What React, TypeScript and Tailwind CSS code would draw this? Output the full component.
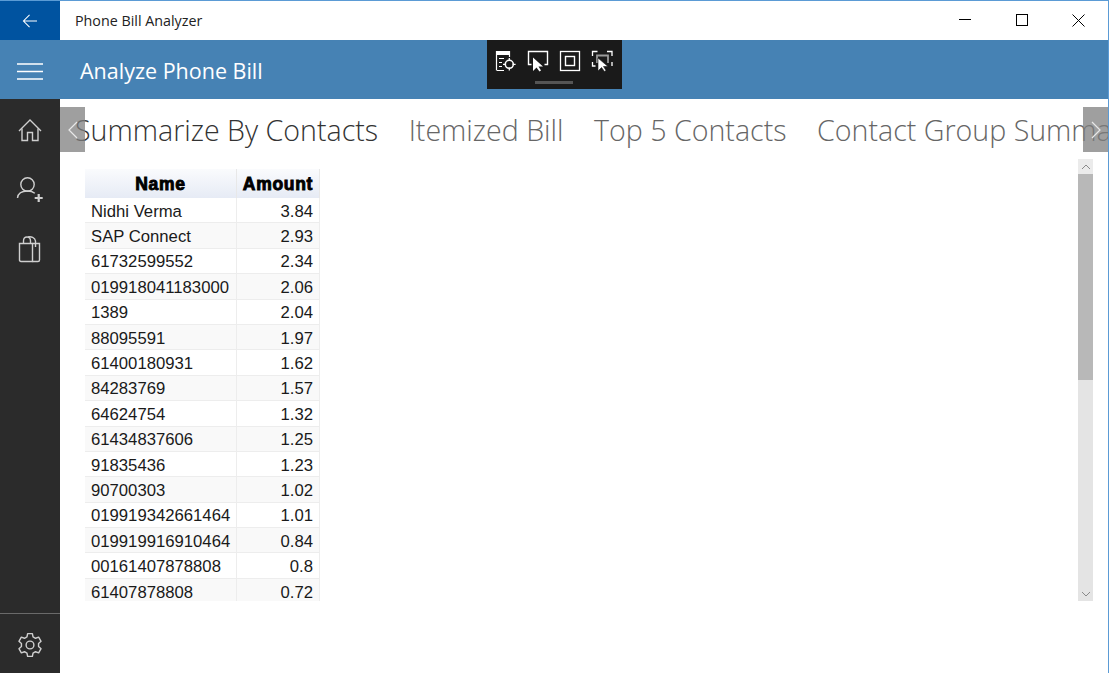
import React from "react";

const rows: [string, string][] = [
  ["Nidhi Verma", "3.84"],
  ["SAP Connect", "2.93"],
  ["61732599552", "2.34"],
  ["019918041183000", "2.06"],
  ["1389", "2.04"],
  ["88095591", "1.97"],
  ["61400180931", "1.62"],
  ["84283769", "1.57"],
  ["64624754", "1.32"],
  ["61434837606", "1.25"],
  ["91835436", "1.23"],
  ["90700303", "1.02"],
  ["019919342661464", "1.01"],
  ["019919916910464", "0.84"],
  ["00161407878808", "0.8"],
  ["61407878808", "0.72"],
];

function Toolbar() {
  return (
    <div className="absolute left-[487px] top-[39px] w-[135px] h-[49px] bg-[#1a1a1a]">
      <svg width="135" height="49" viewBox="0 1 135 49" fill="none" stroke="white">
        <path d="M9.5 31.5V12.5H22.5V18" strokeWidth="1.2" />
        <path d="M9 12H23V16H9Z" fill="white" stroke="none" />
        <path d="M12 19.5h5M12 23.5h3M12 27.5h3M10 31.5h7" strokeWidth="1.2" />
        <circle cx="22.3" cy="25.3" r="4" strokeWidth="1.6" />
        <path d="M22.3 19v3M22.3 28.6v3M16 25.3h3M25.6 25.3h3" strokeWidth="1.3" />
        <path d="M44.5 25.5H41.5V12.5H60.5V25.5H57.5" strokeWidth="1.4" />
        <path d="M46 18.5V32L49.5 28.5L52.5 32.5L54 31.5L51.5 27.5H56Z" fill="white" stroke="none" />
        <rect x="73.5" y="12.5" width="19" height="19" strokeWidth="1.3" />
        <rect x="78.5" y="17.5" width="9" height="9" strokeWidth="1.4" />
        <path d="M105.5 17v-4.5h5M120 12.5h5V17M105.5 23v4h3M125 23v4" strokeWidth="1.3" />
        <path d="M110 24v-7.5H121V24" stroke="#9a9a9a" strokeWidth="1.8" />
        <path d="M111 19V32L114.5 28.5L117.5 32.5L119 31.5L116.5 27.5H121Z" fill="white" stroke="#1a1a1a" strokeWidth="0.6" />
        <path d="M48 43.5H86" stroke="#555" strokeWidth="3" />
      </svg>
    </div>
  );
}

function Sidebar() {
  return (
    <aside className="w-[60px] shrink-0 bg-[#2b2b2b] flex flex-col justify-between text-[#cfcfcf]">
      <div className="flex flex-col">
        <div className="h-[60px] pt-[2px] flex items-center justify-center">
          <svg width="24" height="24" viewBox="0 0 24 24" fill="none" stroke="currentColor" strokeWidth="1.4">
            <path d="M1 13L12 2L23 13" />
            <path d="M4 10.5V22.5H9.5V14.5H14.5V22.5H20V10.5" />
          </svg>
        </div>
        <div className="h-[60px] flex items-center justify-center">
          <svg width="28" height="28" viewBox="0 0 28 28" fill="none" stroke="currentColor" strokeWidth="1.4">
            <circle cx="11.5" cy="9.5" r="6.7" />
            <path d="M1.5 23C2 18.5 6 16 11.5 16C14.5 16 17 16.8 18.8 18.2" />
            <path d="M22.7 19V27M18.7 23H26.7" strokeWidth="2.2" />
          </svg>
        </div>
        <div className="h-[60px] flex items-center justify-center">
          <svg width="24" height="28" viewBox="0 0 24 28" fill="none" stroke="currentColor" strokeWidth="1.4">
            <path d="M1.5 8.5H14.5V26.5H3C2 26.5 1.5 26 1.5 25Z" />
            <path d="M14.5 8.5H21.5V25C21.5 26 21 26.5 20 26.5H14.5" />
            <path d="M5.5 8.5V6C5.5 3.5 7 2 9 2C11 2 12.5 3.5 12.5 6V8.5" />
            <path d="M10 2C13 1.2 17 2.5 17.5 6V12" />
          </svg>
        </div>
      </div>
      <div className="h-[60px] pt-[3px] border-t border-[#6a6a6a] flex items-center justify-center">
        <svg width="26" height="26" viewBox="0 0 24 24" fill="none" stroke="currentColor" strokeWidth="1.3" strokeLinejoin="round">
          <path d="M9.8 1.5h4.4l.6 3 2.3 1.3 2.9-1 2.2 3.8-2.3 2v2.8l2.3 2-2.2 3.8-2.9-1-2.3 1.3-.6 3H9.8l-.6-3-2.3-1.3-2.9 1-2.2-3.8 2.3-2v-2.8l-2.3-2 2.2-3.8 2.9 1 2.3-1.3z" />
          <circle cx="12" cy="12" r="3.6" />
        </svg>
      </div>
    </aside>
  );
}

function BillTable() {
  return (
    <div className="w-[235px] h-[432px] overflow-hidden font-['Liberation_Sans',sans-serif] text-[16.7px] text-[#1a1a1a]">
      <div className="flex h-[29px] bg-gradient-to-b from-[#fafbfd] to-[#e6ebf5] text-black text-[17.5px] tracking-[0.7px] font-bold [-webkit-text-stroke:0.9px_black]">
        <div className="w-[152px] pt-[2px] flex items-center justify-center border-r border-[#e8e8e8]">Name</div>
        <div className="flex-1 pt-[2px] flex items-center justify-center border-r border-[#e8e8e8]">Amount</div>
      </div>
      {rows.map(([name, amount], i) => (
        <div
          key={name}
          className={`flex h-[25.4px] items-center border-b border-[#ededed] ${i % 2 === 1 ? "bg-[#f9f9f9]" : "bg-white"}`}
        >
          <div className="w-[152px] h-full pt-[2px] flex items-center pl-[6px] border-r border-[#ededed]">{name}</div>
          <div className="flex-1 h-full pt-[2px] flex items-center justify-end pr-[6px] border-r border-[#ededed]">{amount}</div>
        </div>
      ))}
    </div>
  );
}

function Scrollbar() {
  return (
    <div className="w-[15px] h-[442px] bg-[#e4e4e4] flex flex-col">
      <div className="h-[15px] bg-[#ebebeb] flex items-center justify-center">
        <svg width="10" height="6" viewBox="0 0 10 6" fill="none" stroke="#8a8a8a"><path d="M1 5L5 1L9 5" /></svg>
      </div>
      <div className="h-[206px] bg-[#b8b8b8]" />
      <div className="flex-1" />
      <div className="h-[15px] flex items-center justify-center">
        <svg width="10" height="6" viewBox="0 0 10 6" fill="none" stroke="#8a8a8a"><path d="M1 1L5 5L9 1" /></svg>
      </div>
    </div>
  );
}

export default function App() {
  return (
    <div className="relative w-[1109px] h-[673px] overflow-hidden bg-white border-t border-r border-[#5b9bd5] flex flex-col font-['Open_Sans',sans-serif]">
      <div className="h-[39px] shrink-0 flex items-center">
        <div className="w-[60px] h-full bg-[#0053a0] flex items-center justify-center">
          <svg width="16" height="14" viewBox="0 0 18 16" fill="none" stroke="white" strokeWidth="1.2">
            <path d="M17 8H1.5M8.5 1L1.5 8L8.5 15" />
          </svg>
        </div>
        <span className="ml-[15px] text-[14.3px] text-[#222]">Phone Bill Analyzer</span>
        <div className="ml-auto mr-[1px] flex items-center text-black">
          <div className="w-[57px] flex justify-center">
            <svg width="13" height="13" viewBox="0 0 13 13" stroke="black"><path d="M1 5.5H13" /></svg>
          </div>
          <div className="w-[57px] flex justify-center">
            <svg width="13" height="13" viewBox="0 0 13 13" fill="none" stroke="black"><rect x="1.5" y="0.5" width="11" height="11" /></svg>
          </div>
          <div className="w-[57px] flex justify-center">
            <svg width="13" height="13" viewBox="0 0 13 13" stroke="black"><path d="M0.5 0.5L12.5 12.5M12.5 0.5L0.5 12.5" /></svg>
          </div>
        </div>
      </div>

      <header className="h-[59px] shrink-0 pt-[4px] bg-[#4682b4] flex items-center">
        <div className="w-[60px] flex justify-center">
          <svg width="26" height="20" viewBox="0 0 26 20" stroke="white" strokeWidth="1.6">
            <path d="M0 2H26M0 9.5H26M0 17H26" />
          </svg>
        </div>
        <h1 className="ml-[20px] text-[21.5px] text-white font-normal">Analyze Phone Bill</h1>
      </header>

      <div className="flex-1 flex min-h-0">
        <Sidebar />
        <main className="relative flex-1 min-w-0 overflow-hidden">
          <div className="h-[60px] pl-[15px] flex items-center gap-[30.5px] whitespace-nowrap text-[28.6px] font-light text-[#666] pt-[2px]">
            <span className="text-[#333]">Summarize By Contacts</span>
            <span>Itemized Bill</span>
            <span>Top 5 Contacts</span>
            <span>Contact Group Summary</span>
          </div>
          <div className="pl-[25px] pr-[15px] flex justify-between items-start">
            <div className="pt-[10px]"><BillTable /></div>
            <Scrollbar />
          </div>
          <div className="absolute left-0 top-[8px] w-[25px] h-[45px] bg-[#7f7f7f]/75 flex items-center justify-center">
            <svg width="12" height="20" viewBox="0 0 12 20" fill="none" stroke="#e8e8e8" strokeWidth="1.2"><path d="M10 2L2 10L10 18" /></svg>
          </div>
          <div className="absolute right-0 top-[8px] w-[25px] h-[45px] bg-[#7f7f7f]/75 flex items-center justify-center">
            <svg width="12" height="20" viewBox="0 0 12 20" fill="none" stroke="#e8e8e8" strokeWidth="1.2"><path d="M2 2L10 10L2 18" /></svg>
          </div>
        </main>
      </div>
      <Toolbar />
    </div>
  );
}
